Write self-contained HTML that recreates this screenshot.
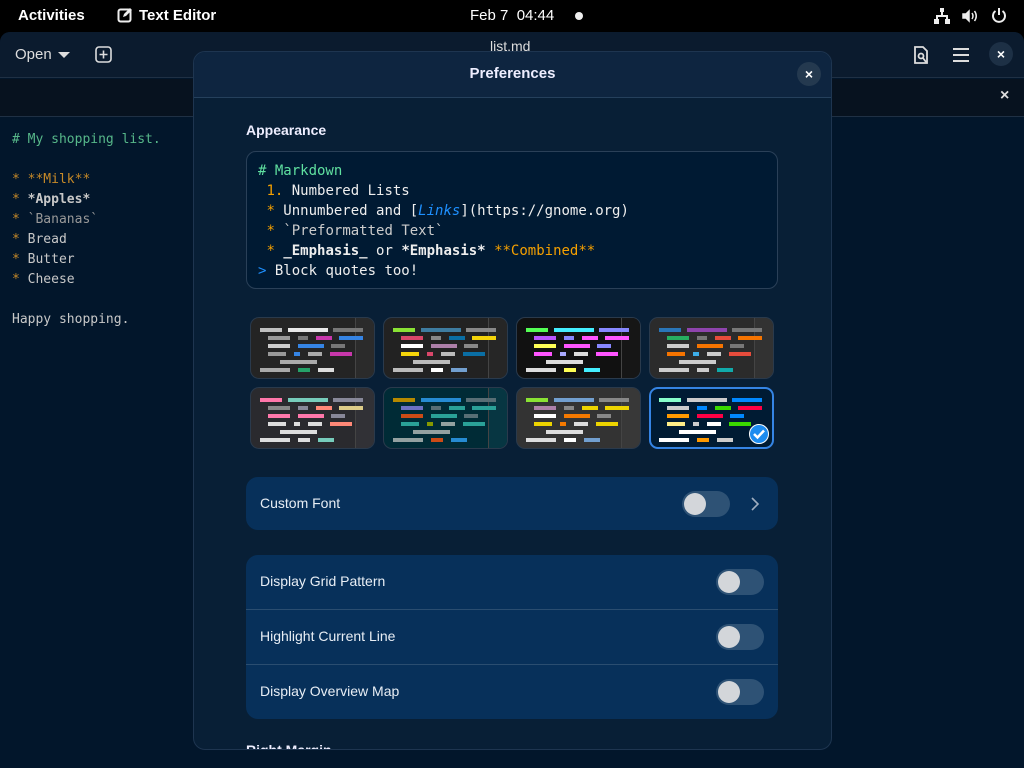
<!DOCTYPE html>
<html><head><meta charset="utf-8"><style>
*{box-sizing:border-box;margin:0;padding:0}
body{width:1024px;height:768px;overflow:hidden;background:#000;font-family:"Liberation Sans",sans-serif;position:relative;color:#fff}
.abs{position:absolute}
.mono{font-family:"DejaVu Sans Mono","Liberation Mono",monospace}
#top{left:0;top:0;width:1024px;height:32px;background:#000;font-size:15px;font-weight:bold}
#win{left:0;top:32px;width:1024px;height:736px;background:#02162b;border-radius:10px 10px 0 0;overflow:hidden}
#hb{left:0;top:0;width:1024px;height:46px;background:#0b1b2e;border-bottom:1px solid #1f3044}
#tabs{left:0;top:47px;width:1024px;height:38px;background:#07121f;border-bottom:1px solid #1f3044}
#ed{left:12px;top:98px;font-size:13px;line-height:20px;color:#c8c8c8;white-space:pre}
#dlg{left:193px;top:51px;width:639px;height:699px;background:#081f36;border:1px solid #1e3550;border-radius:12px;overflow:hidden}
#dh{left:0;top:0;width:100%;height:46px;background:#0e2540;border-bottom:1px solid #25405c}
.cb{width:24px;height:24px;border-radius:12px;background:#24394f;color:#fff;font-size:14px;font-weight:bold;text-align:center;line-height:24px}
#pv{left:52px;top:99px;width:532px;height:138px;background:#001a33;border:1px solid #2a4058;border-radius:10px;padding:9px 0 0 11px;font-size:14px;line-height:20px;white-space:pre;color:#eee}
.tile{width:125px;height:62px;border-radius:9px;border:1px solid #2a3a4c;overflow:hidden}
.tile i{position:absolute;height:4px}
.row{left:52px;width:532px;background:#07305a;font-size:14px;color:#e8eef5}
.sw{width:48px;height:26px;border-radius:13px;background:#2e5275}
.sw:after{content:"";position:absolute;left:2px;top:2px;width:22px;height:22px;border-radius:11px;background:#d3d6da}
</style></head><body>
<div id="top" class="abs">
 <div class="abs" style="left:18px;top:7px">Activities</div>
 <svg class="abs" style="left:117px;top:7px" width="16" height="16" viewBox="0 0 16 16"><rect x="1.5" y="2.5" width="12" height="12" rx="2" fill="none" stroke="#eee" stroke-width="2"/><path d="M6 10l1-3 6-6 2 2-6 6z" fill="#eee"/></svg>
 <div class="abs" style="left:139px;top:7px">Text Editor</div>
 <div class="abs" style="left:470px;top:7px;font-weight:normal">Feb 7&nbsp; 04:44</div>
 <div class="abs" style="left:575px;top:12px;width:8px;height:8px;border-radius:4px;background:#eee"></div>
 <svg class="abs" style="left:934px;top:8px" width="16" height="16" viewBox="0 0 16 16" fill="#eee"><rect x="6" y="0" width="4" height="4"/><rect x="7" y="4" width="2" height="4"/><rect x="2" y="7" width="12" height="2"/><rect x="2" y="7" width="2" height="5"/><rect x="12" y="7" width="2" height="5"/><rect x="0" y="11" width="5" height="5"/><rect x="11" y="11" width="5" height="5"/></svg>
 <svg class="abs" style="left:962px;top:8px" width="16" height="16" viewBox="0 0 16 16" fill="none" stroke="#eee" stroke-width="1.5"><path d="M1 6h3l3-3v10l-3-3H1z" fill="#eee"/><path d="M10 5q2 3 0 6M12.5 3q3.5 5 0 10"/></svg>
 <svg class="abs" style="left:991px;top:7px" width="16" height="16" viewBox="0 0 16 16" fill="none" stroke="#eee" stroke-width="2"><path d="M8 1v7"/><path d="M4.5 4a6 6 0 1 0 7 0"/></svg>
</div>
<div id="win" class="abs">
 <div id="hb" class="abs">
  <div class="abs" style="left:15px;top:14px;font-size:15px;color:#ddd">Open</div>
  <div class="abs" style="left:58px;top:20px;border:6px solid transparent;border-top:6px solid #ddd;border-bottom:0"></div>
  <svg class="abs" style="left:95px;top:14px" width="17" height="17" viewBox="0 0 17 17" fill="none" stroke="#ddd" stroke-width="1.6"><rect x="1" y="1" width="15" height="15" rx="3"/><path d="M8.5 4.5v8M4.5 8.5h8"/></svg>
  <div class="abs" style="left:490px;top:6px;font-size:14px;color:#ddd">list.md</div>
  <svg class="abs" style="left:913px;top:14px" width="16" height="18" viewBox="0 0 16 18" fill="none" stroke="#ddd" stroke-width="1.8"><path d="M2 1h8l4 4v12H2z"/><circle cx="8" cy="10" r="2.5"/><path d="M10 12l3 4"/></svg>
  <svg class="abs" style="left:953px;top:16px" width="16" height="14" viewBox="0 0 16 14" stroke="#ddd" stroke-width="2"><path d="M0 1h16M0 7h16M0 13h16"/></svg>
  <div class="abs cb" style="left:989px;top:10px;background:#1d3045">×</div>
 </div>
 <div id="tabs" class="abs"><div class="abs" style="left:1000px;top:8px;font-size:16px;font-weight:bold;color:#ddd">×</div></div>
 <div id="ed" class="abs mono"><span style="color:#57b88a"># My shopping list.</span>

<span style="color:#c78a28">* **Milk**</span>
<span style="color:#c78a28">*</span> <b>*Apples*</b>
<span style="color:#c78a28">*</span> <span style="color:#999">`Bananas`</span>
<span style="color:#c78a28">*</span> Bread
<span style="color:#c78a28">*</span> Butter
<span style="color:#c78a28">*</span> Cheese

Happy shopping.</div>
</div>
<div id="dlg" class="abs">
 <div id="dh" class="abs">
  <div class="abs" style="left:0;width:100%;top:13px;text-align:center;font-size:15px;font-weight:bold;color:#eef">Preferences</div>
  <div class="abs cb" style="left:603px;top:10px">×</div>
 </div>
 <div class="abs" style="left:52px;top:70px;font-size:14px;font-weight:bold;color:#eef">Appearance</div>
 <div id="pv" class="abs mono"><span style="color:#5fe0a0"># Markdown</span>
 <span style="color:#f5a000">1.</span> Numbered Lists
 <span style="color:#f5a000">*</span> Unnumbered and [<i style="color:#1e90ff">Links</i>](https://gnome.org)
 <span style="color:#f5a000">*</span> <span style="color:#ccc">`Preformatted Text`</span>
 <span style="color:#f5a000">*</span> <b>_Emphasis_</b> or <b>*Emphasis*</b> <span style="color:#f5a000">**Combined**</span>
<span style="color:#1e90ff">&gt;</span> Block quotes too!</div>
 <div id="tiles"></div>
 <div class="abs row" style="top:425px;height:53px;border-radius:12px">
  <div class="abs" style="left:14px;top:18px">Custom Font</div>
  <div class="abs sw" style="left:436px;top:14px"></div>
  <svg class="abs" style="left:504px;top:19px" width="10" height="16" viewBox="0 0 10 16" fill="none" stroke="#a0aec0" stroke-width="1.6"><path d="M2 2l6 6-6 6"/></svg>
 </div>
 <div class="abs row" style="top:503px;height:164px;border-radius:12px">
  <div class="abs" style="left:14px;top:18px">Display Grid Pattern</div>
  <div class="abs sw" style="left:470px;top:14px"></div>
  <div class="abs" style="left:0;top:54px;width:100%;height:1px;background:#2a4d70"></div>
  <div class="abs" style="left:14px;top:73px">Highlight Current Line</div>
  <div class="abs sw" style="left:470px;top:69px"></div>
  <div class="abs" style="left:0;top:109px;width:100%;height:1px;background:#2a4d70"></div>
  <div class="abs" style="left:14px;top:128px">Display Overview Map</div>
  <div class="abs sw" style="left:470px;top:124px"></div>
 </div>
 <div class="abs" style="left:52px;top:690px;font-size:14px;font-weight:bold;color:#eef">Right Margin</div>
</div>
<script>
var L=[[[9,22],[37,40],[82,30]],[[17,22],[47,10],[65,16],[88,24]],[[17,22],[47,26],[80,14]],[[17,18],[43,6],[57,14],[79,22]],[[29,37]],[[9,30],[47,12],[67,16]]];
var T=[
["#242424","#2b2b2b","#c0c0c0,#e8e8e8,#777,#999,#777,#c837ab,#3584e4,#ccc,#3584e4,#777,#999,#3584e4,#aaa,#c837ab,#aaa,#aaa,#26a269,#ddd"],
["#222","#262626","#8ae234,#3e7ca0,#888,#d9476a,#888,#0a6ea4,#f4d40a,#fff,#ad7fa8,#888,#f4d40a,#d9476a,#bbb,#0a6ea4,#bbb,#bbb,#fff,#729fcf"],
["#111","#161616","#5f5,#4ef,#88f,#b5f,#88f,#f5f,#f5f,#ff5,#f5f,#88f,#f5f,#aaf,#ddd,#f5f,#ddd,#ddd,#ff5,#4ef"],
["#2b2b2b","#323232","#2a76b8,#8e44ad,#777,#27ae60,#777,#e74c3c,#f67400,#ccc,#f67400,#777,#f67400,#3daee9,#ccc,#e74c3c,#ccc,#ccc,#ccc,#1aa"],
["#2a2a2e","#313136","#f7a,#7cb,#889,#888,#889,#f87,#dc8,#f7a,#f7a,#889,#ddd,#ddd,#ddd,#f87,#ddd,#ddd,#ddd,#7cb"],
["#002b36","#073642","#b58900,#268bd2,#586e75,#6c71c4,#586e75,#2aa198,#2aa198,#cb4b16,#2aa198,#586e75,#2aa198,#859900,#93a1a1,#2aa198,#93a1a1,#93a1a1,#cb4b16,#268bd2"],
["#333","#383838","#8ae234,#729fcf,#888,#ad7fa8,#888,#edd400,#edd400,#fff,#f57900,#888,#edd400,#f57900,#ddd,#edd400,#ddd,#ddd,#fff,#729fcf"],
["#001b33","#001b33","#8fc,#ccc,#0088ff,#ccc,#08f,#3ad900,#ff0044,#f90,#ff0044,#08f,#fe8,#ccc,#fff,#3ad900,#fff,#fff,#f90,#ccc"]];
var h="";
T.forEach(function(t,k){
 var x=56+(k%4)*133,y=265+Math.floor(k/4)*70,c=t[2].split(","),n=0;
 var sel=k==7;
 h+='<div class="abs tile" style="left:'+x+'px;top:'+y+'px;background:'+t[0]+';'+(sel?'border:2px solid #3584e4;':'')+'">';
 if(!sel)h+='<div class="abs" style="left:104px;top:0;width:21px;height:62px;background:'+t[1]+';border-left:1px solid #444"></div>';
 L.forEach(function(r,ri){r.forEach(function(b){h+='<i style="left:'+(b[0]-(sel?1:0))+'px;top:'+(10+ri*8-(sel?1:0))+'px;width:'+b[1]+'px;background:'+c[n++]+'"></i>';});});
 if(sel)h+='<div class="abs" style="left:98px;top:35px;width:20px;height:20px;border-radius:10px;background:#1c8cf0;border:1px solid #fff"><svg width="18" height="18" viewBox="0 0 18 18"><path d="M4 9l3.5 3.5L14 5.5" fill="none" stroke="#fff" stroke-width="2.5"/></svg></div>';
 h+='</div>';
});
document.getElementById("tiles").innerHTML=h;
</script>
</body></html>
